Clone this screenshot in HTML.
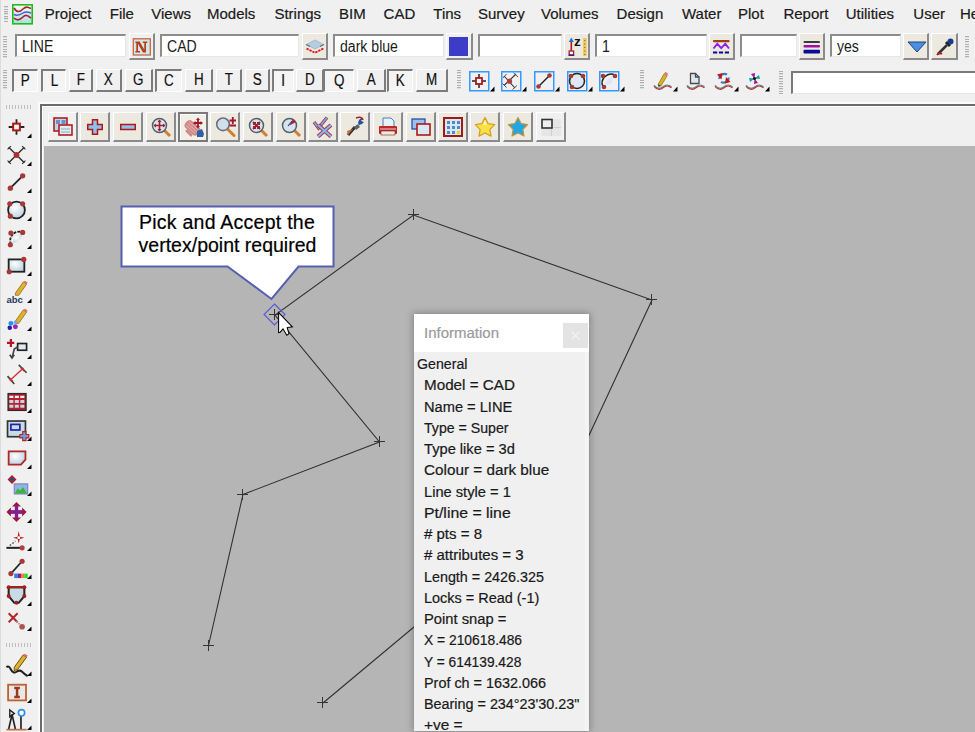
<!DOCTYPE html><html><head><meta charset="utf-8"><style>
html,body{margin:0;padding:0;}
body{width:975px;height:732px;overflow:hidden;position:relative;background:#f0f0f0;font-family:"Liberation Sans",sans-serif;}
.t{position:absolute;white-space:pre;line-height:1;-webkit-text-stroke:0.2px currentColor;}
.inp{position:absolute;box-sizing:border-box;background:#fff;border-top:2px solid #8c8c8c;border-left:2px solid #8c8c8c;border-right:1px solid #e6e6e6;border-bottom:1px solid #e6e6e6;}
.inp span{position:absolute;left:5px;top:1px;line-height:19px;white-space:pre;color:#1a1a1a;}
.btn{position:absolute;box-sizing:border-box;border-top:1px solid #fff;border-left:1px solid #fff;border-right:2px solid #8a8a8a;border-bottom:2px solid #8a8a8a;}
.lb{position:absolute;box-sizing:border-box;background:#f0f0f0;border-top:1px solid #fff;border-left:1px solid #fff;border-right:2px solid #7c7c7c;border-bottom:2px solid #7c7c7c;text-align:center;font-size:16px;line-height:20px;color:#111;-webkit-text-stroke:0.2px currentColor;}
.lb.dn{border-top:2px solid #7c7c7c;border-left:2px solid #7c7c7c;border-right:1px solid #fff;border-bottom:1px solid #fff;background:#f4f4f4;}
svg{position:absolute;overflow:visible;}
</style></head><body>
<div style="position:absolute;left:0px;top:0px;width:1px;height:732px;background:#dcdcdc"></div>
<div style="position:absolute;left:4px;top:6px;width:4px;height:16px;background:repeating-linear-gradient(to bottom,#b0b0b0 0 1px,#dedede 1px 1.5px,transparent 1.5px 2.5px)"></div>
<svg style="left:12px;top:4px" width="21" height="21" viewBox="0 0 21 21">
<defs><linearGradient id="ag" x1="0" y1="0" x2="0" y2="1"><stop offset="0" stop-color="#fbfbfb"/><stop offset="0.5" stop-color="#d8e8f4"/><stop offset="1" stop-color="#a8dce0"/></linearGradient></defs>
<rect x="0.8" y="0.8" width="19.4" height="19" fill="url(#ag)" stroke="#18c018" stroke-width="1.6"/>
<path d="M2 4 C5 9 8 8 11 5 S16 3 19 4.5" stroke="#a82828" stroke-width="1.7" fill="none"/>
<path d="M2 10.5 C5 12 8 11 11 9 S16 8 19 9" stroke="#4060c8" stroke-width="1.5" fill="none"/>
<path d="M2 14 C5 17 8 16 11 13 S16 12 19 14" stroke="#a82828" stroke-width="1.7" fill="none"/>
</svg>
<div class="t" style="left:44.8px;top:6px;font-size:15px;color:#1a1a1a;">Project</div>
<div class="t" style="left:109.8px;top:6px;font-size:15px;color:#1a1a1a;">File</div>
<div class="t" style="left:151.3px;top:6px;font-size:15px;color:#1a1a1a;">Views</div>
<div class="t" style="left:207px;top:6px;font-size:15px;color:#1a1a1a;">Models</div>
<div class="t" style="left:274.4px;top:6px;font-size:15px;color:#1a1a1a;">Strings</div>
<div class="t" style="left:339px;top:6px;font-size:15px;color:#1a1a1a;">BIM</div>
<div class="t" style="left:383.6px;top:6px;font-size:15px;color:#1a1a1a;">CAD</div>
<div class="t" style="left:433.3px;top:6px;font-size:15px;color:#1a1a1a;">Tins</div>
<div class="t" style="left:478px;top:6px;font-size:15px;color:#1a1a1a;">Survey</div>
<div class="t" style="left:541px;top:6px;font-size:15px;color:#1a1a1a;">Volumes</div>
<div class="t" style="left:616.6px;top:6px;font-size:15px;color:#1a1a1a;">Design</div>
<div class="t" style="left:682px;top:6px;font-size:15px;color:#1a1a1a;">Water</div>
<div class="t" style="left:738px;top:6px;font-size:15px;color:#1a1a1a;">Plot</div>
<div class="t" style="left:783.4px;top:6px;font-size:15px;color:#1a1a1a;">Report</div>
<div class="t" style="left:845.7px;top:6px;font-size:15px;color:#1a1a1a;">Utilities</div>
<div class="t" style="left:913.3px;top:6px;font-size:15px;color:#1a1a1a;">User</div>
<div class="t" style="left:960px;top:6px;font-size:15px;color:#1a1a1a;">Help</div>
<div style="position:absolute;left:3px;top:36px;width:4px;height:22px;background:repeating-linear-gradient(to bottom,#b0b0b0 0 1px,#dedede 1px 1.5px,transparent 1.5px 2.5px)"></div>
<div class="inp" style="left:15px;top:34px;width:111px;height:23px"><span style="font-size:16px;transform:scaleX(0.88);transform-origin:0 0">LINE</span></div>
<div class="btn" style="left:129px;top:33px;width:26px;height:27px;background:#f0f0f0"><svg style="left:2px;top:4px" width="19" height="18" viewBox="0 0 19 18"><rect x="1.3" y="0.8" width="17" height="16.2" fill="#d4e4ec" stroke="#c8683c" stroke-width="1.3"/><path d="M3.4 3.4 H8 V5 H3.4Z M4.3 3.4 H6 V14.4 H4.3Z M3.4 13 H8 V14.6 H3.4Z M4.6 3.4 H7.6 L14 14.6 H11Z M12.3 3.4 H14 V14.6 H12.3Z M10.8 3.4 H15.3 V5 H10.8Z" fill="#b4401a"/></svg></div>
<div class="inp" style="left:160px;top:34px;width:139px;height:23px"><span style="font-size:16px;transform:scaleX(0.88);transform-origin:0 0">CAD</span></div>
<div class="btn" style="left:302px;top:33px;width:26px;height:27px;background:#ece9e0"><svg style="left:1px;top:3px" width="22" height="20" viewBox="0 0 22 20"><path d="M2.5 7.5 L11 3 L19.5 7.5 L11 12Z" fill="#b4cce4" stroke="#98b0c8" stroke-width="0.8"/><path d="M2 7.5 L6 9.5 M20 7.5 L16 9.5" stroke="#607080" stroke-width="1.3"/><path d="M2.5 11.5 L11 15.8 L19.5 11.5" stroke="#e01818" stroke-width="1.8" fill="none" stroke-dasharray="2.4 0.9"/></svg></div>
<div class="inp" style="left:333px;top:34px;width:111px;height:23px"><span style="font-size:16px;transform:scaleX(0.88);transform-origin:0 0">dark blue</span></div>
<div class="btn" style="left:446px;top:33px;width:27px;height:27px;background:#f0f0f0"><div style="position:absolute;left:2px;top:3px;width:19px;height:19px;background:#3c3cc8"></div></div>
<div class="inp" style="left:478px;top:34px;width:84px;height:23px"><span style="font-size:16px;transform:scaleX(0.88);transform-origin:0 0"></span></div>
<div class="btn" style="left:564px;top:33px;width:26px;height:27px;background:#ece9e0"><svg style="left:2px;top:2px" width="22" height="22" viewBox="0 0 22 22"><path d="M4.3 5 V15" stroke="#b01828" stroke-width="1.6"/><path d="M1.8 6 L4.3 1.5 L6.8 6Z" fill="#2a6ad8"/><rect x="2.2" y="15" width="4.4" height="4" fill="#fff" stroke="#b01828" stroke-width="1.3"/><path d="M1.6 19.2 H7.2" stroke="#1a1aa0" stroke-width="1.3"/><text x="7" y="10" font-family="Liberation Sans" font-weight="bold" font-size="13.5" fill="#111">z</text><rect x="16" y="2" width="3.6" height="18" fill="#f2c858"/><path d="M17.8 4 V19" stroke="#5a4a20" stroke-width="1" stroke-dasharray="0.9 2.6"/></svg></div>
<div class="inp" style="left:595px;top:34px;width:112px;height:23px"><span style="font-size:16px;transform:scaleX(0.88);transform-origin:0 0">1</span></div>
<div class="btn" style="left:709px;top:33px;width:26px;height:27px;background:#ece9e0"><svg style="left:2px;top:5px" width="20" height="18" viewBox="0 0 20 18"><rect x="1" y="1" width="16.5" height="2.2" rx="0.8" fill="#984010"/><path d="M1.5 9.5 L5.3 4.8 L9.2 9.2 L13.3 4.8 L17 9.5" stroke="#9020e8" stroke-width="1.9" fill="none"/><path d="M1 13.5 H17.5" stroke="#0a0a90" stroke-width="2.2" stroke-dasharray="4.2 1.7"/></svg></div>
<div class="inp" style="left:740px;top:34px;width:57px;height:23px"><span style="font-size:16px;transform:scaleX(0.88);transform-origin:0 0"></span></div>
<div class="btn" style="left:799px;top:33px;width:26px;height:27px;background:#ece9e0"><svg style="left:3px;top:7px" width="18" height="14" viewBox="0 0 18 14"><rect x="0.5" y="0" width="16.5" height="2" rx="1" fill="#3a3a3a"/><rect x="0.5" y="4" width="16.5" height="2.6" rx="1" fill="#a010a0"/><rect x="0.5" y="8.8" width="16.5" height="3.6" rx="1" fill="#0a0a9a"/></svg></div>
<div class="inp" style="left:830px;top:34px;width:71px;height:23px"><span style="font-size:16px;transform:scaleX(0.88);transform-origin:0 0">yes</span></div>
<div class="btn" style="left:903px;top:33px;width:26px;height:27px;background:#ece9e0"><svg style="left:3px;top:7px" width="20" height="12" viewBox="0 0 20 12"><path d="M1 1 H19 L10 11Z" fill="#4a90e0" stroke="#204080" stroke-width="1"/></svg></div>
<div class="btn" style="left:931px;top:33px;width:27px;height:27px;background:#ece9e0"><svg style="left:3px;top:3px" width="20" height="20" viewBox="0 0 20 20"><path d="M3 17 L12 8" stroke="#333" stroke-width="2.5"/><path d="M11 5 L15 9" stroke="#222" stroke-width="3"/><circle cx="15.5" cy="4.5" r="3" fill="#1a3a8a"/><path d="M2 18 Q4 15 7 17" stroke="#b02020" stroke-width="2" fill="none"/></svg></div>
<div style="position:absolute;left:965px;top:36px;width:4px;height:22px;background:repeating-linear-gradient(to bottom,#b0b0b0 0 1px,#dedede 1px 1.5px,transparent 1.5px 2.5px)"></div>
<div style="position:absolute;left:3px;top:70px;width:4px;height:20px;background:repeating-linear-gradient(to bottom,#b0b0b0 0 1px,#dedede 1px 1.5px,transparent 1.5px 2.5px)"></div>
<div class="lb dn" style="left:12px;top:69px;width:26px;height:23px"><span style="display:inline-block;transform:scaleX(0.84)">P</span></div>
<div class="lb dn" style="left:41px;top:69px;width:25px;height:23px"><span style="display:inline-block;transform:scaleX(0.84)">L</span></div>
<div class="lb" style="left:69px;top:69px;width:24px;height:23px"><span style="display:inline-block;transform:scaleX(0.84)">F</span></div>
<div class="lb" style="left:96px;top:69px;width:26px;height:23px"><span style="display:inline-block;transform:scaleX(0.84)">X</span></div>
<div class="lb" style="left:125px;top:69px;width:28px;height:23px"><span style="display:inline-block;transform:scaleX(0.84)">G</span></div>
<div class="lb dn" style="left:155px;top:69px;width:27px;height:23px"><span style="display:inline-block;transform:scaleX(0.84)">C</span></div>
<div class="lb" style="left:185px;top:69px;width:28px;height:23px"><span style="display:inline-block;transform:scaleX(0.84)">H</span></div>
<div class="lb" style="left:216px;top:69px;width:26px;height:23px"><span style="display:inline-block;transform:scaleX(0.84)">T</span></div>
<div class="lb" style="left:245px;top:69px;width:25px;height:23px"><span style="display:inline-block;transform:scaleX(0.84)">S</span></div>
<div class="lb dn" style="left:272px;top:69px;width:22px;height:23px"><span style="display:inline-block;transform:scaleX(0.84)">I</span></div>
<div class="lb" style="left:296px;top:69px;width:28px;height:23px"><span style="display:inline-block;transform:scaleX(0.84)">D</span></div>
<div class="lb dn" style="left:323px;top:69px;width:31px;height:23px"><span style="display:inline-block;transform:scaleX(0.84)">Q</span></div>
<div class="lb" style="left:357px;top:69px;width:29px;height:23px"><span style="display:inline-block;transform:scaleX(0.84)">A</span></div>
<div class="lb dn" style="left:387px;top:69px;width:26px;height:23px"><span style="display:inline-block;transform:scaleX(0.84)">K</span></div>
<div class="lb" style="left:416px;top:69px;width:32px;height:23px"><span style="display:inline-block;transform:scaleX(0.84)">M</span></div>
<div style="position:absolute;left:457px;top:70px;width:4px;height:20px;background:repeating-linear-gradient(to bottom,#b0b0b0 0 1px,#dedede 1px 1.5px,transparent 1.5px 2.5px)"></div>
<svg style="left:469px;top:71px" width="26" height="21" viewBox="0 0 26 21"><rect x="0.75" y="0.75" width="19" height="19" fill="none" stroke="#3399ff" stroke-width="1.5"/><path d="M10 3 V17 M3 10 H17" stroke="#222" stroke-width="1.5"/><rect x="7" y="7" width="6" height="6" fill="#fff" stroke="#b01818" stroke-width="1.8"/><path d="M21 20.5 L25.5 20.5 L25.5 15.5Z" fill="#000"/></svg>
<svg style="left:501px;top:71px" width="26" height="21" viewBox="0 0 26 21"><rect x="0.75" y="0.75" width="19" height="19" fill="none" stroke="#3399ff" stroke-width="1.5"/><path d="M3 5 L14 17 M15 3 L3 14.5" stroke="#333" stroke-width="1.1"/><path d="M12.5 1.8 L17 6 M1.5 12.5 L5.5 16.5 M11.5 18.5 L16 14.5 M2 7 L5.5 3" stroke="#444" stroke-width="0.9"/><circle cx="8.5" cy="10.2" r="2.6" fill="#b04040"/><path d="M21 20.5 L25.5 20.5 L25.5 15.5Z" fill="#000"/></svg>
<svg style="left:534px;top:71px" width="26" height="21" viewBox="0 0 26 21"><rect x="0.75" y="0.75" width="19" height="19" fill="none" stroke="#3399ff" stroke-width="1.5"/><path d="M4 16 L16 4" stroke="#222" stroke-width="1.5"/><circle cx="4.5" cy="15.5" r="2.3" fill="#a83838"/><circle cx="15.5" cy="4.5" r="2.3" fill="#a83838"/><path d="M21 20.5 L25.5 20.5 L25.5 15.5Z" fill="#000"/></svg>
<svg style="left:567px;top:71px" width="26" height="21" viewBox="0 0 26 21"><rect x="0.75" y="0.75" width="19" height="19" fill="none" stroke="#3399ff" stroke-width="1.5"/><circle cx="10" cy="10" r="7.5" fill="#dfe8f2" stroke="#222" stroke-width="1.5"/><circle cx="4" cy="5" r="2.3" fill="#a83838"/><circle cx="16" cy="5" r="2.3" fill="#a83838"/><circle cx="5" cy="16" r="2.3" fill="#a83838"/><path d="M21 20.5 L25.5 20.5 L25.5 15.5Z" fill="#000"/></svg>
<svg style="left:599px;top:71px" width="26" height="21" viewBox="0 0 26 21"><rect x="0.75" y="0.75" width="19" height="19" fill="none" stroke="#3399ff" stroke-width="1.5"/><path d="M4 16 A9 9 0 0 1 16 4" fill="none" stroke="#222" stroke-width="1.5"/><path d="M6 14 Q8 6 15 6 L12 13Z" fill="#dfe8f2"/><circle cx="4" cy="5" r="2.3" fill="#a83838"/><circle cx="16" cy="5" r="2.3" fill="#a83838"/><circle cx="5" cy="16" r="2.3" fill="#a83838"/><path d="M21 20.5 L25.5 20.5 L25.5 15.5Z" fill="#000"/></svg>
<div style="position:absolute;left:640px;top:70px;width:4px;height:20px;background:repeating-linear-gradient(to bottom,#b0b0b0 0 1px,#dedede 1px 1.5px,transparent 1.5px 2.5px)"></div>
<svg style="left:653px;top:71px" width="25" height="21" viewBox="0 0 25 21"><path d="M5 13.5 L11 3 L14.2 4.6 L8 15Z" fill="#e0b020" stroke="#8a6a10" stroke-width="0.7"/><path d="M11 3 L14.2 4.6 L15.2 2.4 L12.2 0.8Z" fill="#e07888"/><path d="M5 13.5 L8 15 L5.5 15.8Z" fill="#222"/><path d="M1 15.3 C4 18.8 7 19.3 10 16.8 S15 14.3 18.5 16.8" stroke="#c03030" stroke-width="1.3" fill="none"/><path d="M1 14.3 C4 17.8 7 18.3 10 15.8 S15 13.3 18.5 15.8" stroke="#707878" stroke-width="1.3" fill="none"/><path d="M20 20.5 L24.5 20.5 L24.5 15.5Z" fill="#000"/></svg>
<svg style="left:686px;top:71px" width="25" height="21" viewBox="0 0 25 21"><path d="M4.5 2.5 H9.5 V6 H13 V12.5 H4.5Z" fill="#dce8f0" stroke="#4a4a4a" stroke-width="1.3"/><path d="M9.5 2.5 L13 6" stroke="#4a4a4a" stroke-width="1.1"/><path d="M1 15.3 C4 18.8 7 19.3 10 16.8 S15 14.3 18.5 16.8" stroke="#c03030" stroke-width="1.3" fill="none"/><path d="M1 14.3 C4 17.8 7 18.3 10 15.8 S15 13.3 18.5 15.8" stroke="#707878" stroke-width="1.3" fill="none"/></svg>
<svg style="left:714px;top:71px" width="25" height="21" viewBox="0 0 25 21"><path d="M5.5 8 A5 4.5 0 0 1 13 3.5" stroke="#3a78c0" stroke-width="2.2" fill="none"/><path d="M14.5 6.5 A5 4.5 0 0 1 7 11" stroke="#3a78c0" stroke-width="2.2" fill="none"/><path d="M3 3.5 L8.5 2 L7.5 8.5Z" fill="#c01818"/><path d="M16.5 11 L11 12.5 L12 6Z" fill="#c01818"/><path d="M1 15.3 C4 18.8 7 19.3 10 16.8 S15 14.3 18.5 16.8" stroke="#c03030" stroke-width="1.3" fill="none"/><path d="M1 14.3 C4 17.8 7 18.3 10 15.8 S15 13.3 18.5 15.8" stroke="#707878" stroke-width="1.3" fill="none"/><path d="M20 20.5 L24.5 20.5 L24.5 15.5Z" fill="#000"/></svg>
<svg style="left:745px;top:71px" width="25" height="21" viewBox="0 0 25 21"><path d="M9.5 7.5 L6 3 L10 2Z" fill="#a018a0"/><path d="M9.5 7.5 L14 4 L15 8Z" fill="#18a0a0"/><path d="M9.5 7.5 L13 12 L9 13Z" fill="#a018a0"/><path d="M9.5 7.5 L5 11 L4 7Z" fill="#18a0a0"/><circle cx="9.5" cy="7.5" r="1.6" fill="#111"/><path d="M1 15.3 C4 18.8 7 19.3 10 16.8 S15 14.3 18.5 16.8" stroke="#c03030" stroke-width="1.3" fill="none"/><path d="M1 14.3 C4 17.8 7 18.3 10 15.8 S15 13.3 18.5 15.8" stroke="#707878" stroke-width="1.3" fill="none"/><path d="M20 20.5 L24.5 20.5 L24.5 15.5Z" fill="#000"/></svg>
<div style="position:absolute;left:779px;top:71px;width:4px;height:23px;background:repeating-linear-gradient(to bottom,#b0b0b0 0 1px,#dedede 1px 1.5px,transparent 1.5px 2.5px)"></div>
<div class="inp" style="left:791px;top:71px;width:200px;height:23px;border-top:2px solid #7a7a7a;border-left:2px solid #7a7a7a"></div>
<div style="position:absolute;left:6px;top:105px;width:25px;height:4px;background:repeating-linear-gradient(to right,#c0c0c0 0 1px,transparent 1px 3px)"></div>
<div style="position:absolute;left:6px;top:643px;width:25px;height:4px;background:repeating-linear-gradient(to right,#c0c0c0 0 1px,transparent 1px 3px)"></div>
<div style="position:absolute;left:38px;top:102px;width:940px;height:640px;background:#fbfbfb"></div>
<div style="position:absolute;left:40px;top:104px;width:940px;height:640px;box-sizing:border-box;border-left:2px solid #6b6b6b;border-top:2px solid #6b6b6b;background:#f0f0f0"></div>
<div style="position:absolute;left:42px;top:106px;width:940px;height:1px;background:#fff"></div>
<div style="position:absolute;left:42px;top:106px;width:1px;height:640px;background:#fff"></div>
<div style="position:absolute;left:44px;top:146px;width:931px;height:586px;background:#b5b5b5"></div>
<svg style="left:0;top:0" width="0" height="0"><defs><radialGradient id="cg" cx="0.4" cy="0.35" r="0.7"><stop offset="0" stop-color="#ffffff"/><stop offset="1" stop-color="#b8d0e0"/></radialGradient></defs></svg>
<svg style="left:6px;top:117px" width="28" height="22" viewBox="0 0 28 22"><g transform="translate(10.5 10) scale(1.12) translate(-10 -10)"><path d="M10 3 V17 M3 10 H17" stroke="#222" stroke-width="1.6"/><rect x="7" y="7" width="6" height="6" fill="#fff" stroke="#b01818" stroke-width="1.8"/></g><path d="M21 21 L25.5 21 L25.5 16.5Z" fill="#000"/></svg>
<svg style="left:6px;top:145px" width="28" height="22" viewBox="0 0 28 22"><g transform="translate(10.5 10) scale(1.12) translate(-10 -10)"><path d="M3 3 L17 17 M17 3 L3 17" stroke="#333" stroke-width="1.3"/><path d="M2 5 L5 2 M15 18 L18 15 M15 2 L18 5 M2 15 L5 18" stroke="#333" stroke-width="1"/><circle cx="10" cy="10" r="2.6" fill="#b03030"/></g><path d="M21 21 L25.5 21 L25.5 16.5Z" fill="#000"/></svg>
<svg style="left:6px;top:172px" width="28" height="22" viewBox="0 0 28 22"><g transform="translate(10.5 10) scale(1.12) translate(-10 -10)"><path d="M4 16 L16 4" stroke="#222" stroke-width="1.6"/><circle cx="4.5" cy="15.5" r="2.4" fill="#a83838"/><circle cx="15.5" cy="4.5" r="2.4" fill="#a83838"/></g><path d="M21 21 L25.5 21 L25.5 16.5Z" fill="#000"/></svg>
<svg style="left:6px;top:200px" width="28" height="22" viewBox="0 0 28 22"><g transform="translate(10.5 10) scale(1.12) translate(-10 -10)"><circle cx="10" cy="10" r="7.5" fill="url(#cg)" stroke="#222" stroke-width="1.6"/><circle cx="4" cy="4.5" r="2.3" fill="#a83838"/><circle cx="15.5" cy="4.5" r="2.3" fill="#a83838"/><circle cx="4.5" cy="15.5" r="2.3" fill="#a83838"/></g><path d="M21 21 L25.5 21 L25.5 16.5Z" fill="#000"/></svg>
<svg style="left:6px;top:228px" width="28" height="22" viewBox="0 0 28 22"><g transform="translate(10.5 10) scale(1.12) translate(-10 -10)"><path d="M5 15.5 A8 8 0 0 1 15.5 5" fill="none" stroke="#222" stroke-width="1.6" stroke-dasharray="2.5 1"/><path d="M6.5 15 Q7 7.5 15 6.5 Q15 12 6.5 15Z" fill="url(#cg)"/><circle cx="5" cy="5.5" r="2.3" fill="#a83838"/><circle cx="15.5" cy="5" r="2.3" fill="#a83838"/><circle cx="4.5" cy="16" r="2.3" fill="#a83838"/></g><path d="M21 21 L25.5 21 L25.5 16.5Z" fill="#000"/></svg>
<svg style="left:6px;top:255px" width="28" height="22" viewBox="0 0 28 22"><g transform="translate(10.5 10) scale(1.12) translate(-10 -10)"><rect x="3" y="5" width="14" height="11" fill="url(#cg)" stroke="#222" stroke-width="1.6"/><circle cx="16.5" cy="5" r="2.3" fill="#a83838"/><circle cx="3.5" cy="16" r="2.3" fill="#a83838"/></g><path d="M21 21 L25.5 21 L25.5 16.5Z" fill="#000"/></svg>
<svg style="left:6px;top:282px" width="28" height="22" viewBox="0 0 28 22"><g transform="translate(10.5 10) scale(1.12) translate(-10 -10)"><path d="M9 11 L16 1 L19 3 L12 13 L9 13Z" fill="#e0b030" stroke="#806000" stroke-width="0.6"/><path d="M16 1 L19 3 L20 1.5 L17.5 0Z" fill="#e07070"/><text x="1" y="20" font-family="Liberation Sans" font-weight="bold" font-size="8.5" fill="#2a3a5a">abc</text></g><path d="M21 21 L25.5 21 L25.5 16.5Z" fill="#000"/></svg>
<svg style="left:6px;top:310px" width="28" height="22" viewBox="0 0 28 22"><g transform="translate(10.5 10) scale(1.12) translate(-10 -10)"><path d="M9 11 L16 1 L19 3 L12 13 L9 13Z" fill="#e0b030" stroke="#806000" stroke-width="0.6"/><path d="M16 1 L19 3 L20 1.5 L17.5 0Z" fill="#e07070"/><circle cx="5" cy="13" r="2.2" fill="#3090e0"/><circle cx="9" cy="16" r="2.2" fill="#a020c0"/><circle cx="4" cy="17" r="2" fill="#2020a0"/><circle cx="9" cy="12" r="1.5" fill="#60b0f0"/></g><path d="M21 21 L25.5 21 L25.5 16.5Z" fill="#000"/></svg>
<svg style="left:6px;top:338px" width="28" height="22" viewBox="0 0 28 22"><g transform="translate(10.5 10) scale(1.12) translate(-10 -10)"><path d="M1.5 5.5 H8 M5 2 V9" stroke="#b01828" stroke-width="2"/><rect x="11" y="6" width="8" height="6" fill="#dfe8f0" stroke="#222" stroke-width="1.5"/><path d="M11 9 L8 11 L6 19 M4 16 L6 19 L8 16" stroke="#444" stroke-width="1.5" fill="none"/></g><path d="M21 21 L25.5 21 L25.5 16.5Z" fill="#000"/></svg>
<svg style="left:6px;top:365px" width="28" height="22" viewBox="0 0 28 22"><g transform="translate(10.5 10) scale(1.12) translate(-10 -10)"><path d="M2 11 L8 18 M12 1 L19 8" stroke="#444" stroke-width="1.5"/><path d="M5 14 L15.5 4.5" stroke="#d03030" stroke-width="1.2"/><path d="M4 12 L4 15.5 L7.5 15.5Z M16.5 3.5 L13 3.5 L16.5 7Z" fill="#d03030"/></g><path d="M21 21 L25.5 21 L25.5 16.5Z" fill="#000"/></svg>
<svg style="left:6px;top:392px" width="28" height="22" viewBox="0 0 28 22"><g transform="translate(10.5 10) scale(1.12) translate(-10 -10)"><rect x="2.5" y="2.5" width="16" height="15" fill="#b82030" stroke="#2a2a2a" stroke-width="1.2"/><path d="M3.6 5.5 H17.4" stroke="#f4f4f4" stroke-width="2" stroke-dasharray="3.6 1.3"/><path d="M3.6 9.5 H17.4 M3.6 13.8 H17.4" stroke="#c8d4e0" stroke-width="2.6" stroke-dasharray="3.6 1.3"/></g><path d="M21 21 L25.5 21 L25.5 16.5Z" fill="#000"/></svg>
<svg style="left:6px;top:420px" width="28" height="22" viewBox="0 0 28 22"><g transform="translate(10.5 10) scale(1.12) translate(-10 -10)"><rect x="2" y="2" width="16" height="14" fill="#c8dce4" stroke="#333" stroke-width="1.5"/><rect x="5" y="5" width="8" height="5" fill="none" stroke="#2020b0" stroke-width="1.5"/><path d="M17 11 V20 M12.5 15.5 H21.5" stroke="#c02020" stroke-width="4"/><path d="M17 12 V19 M13.5 15.5 H20.5" stroke="#60a0e0" stroke-width="2"/></g><path d="M21 21 L25.5 21 L25.5 16.5Z" fill="#000"/></svg>
<svg style="left:6px;top:448px" width="28" height="22" viewBox="0 0 28 22"><g transform="translate(10.5 10) scale(1.12) translate(-10 -10)"><path d="M3 4 H18 V11.5 L14 16 H3Z" fill="url(#cg)" stroke="#b02828" stroke-width="1.6"/></g><path d="M21 21 L25.5 21 L25.5 16.5Z" fill="#000"/></svg>
<svg style="left:6px;top:475px" width="28" height="22" viewBox="0 0 28 22"><g transform="translate(10.5 10) scale(1.12) translate(-10 -10)"><path d="M6 1 L10 5 L6 9 L2 5Z" fill="#b02020"/><rect x="4.5" y="3.5" width="3" height="3" fill="#2050a0"/><rect x="8" y="9" width="12" height="9" fill="#8ab8e0" stroke="#8080c0" stroke-width="1"/><path d="M8.5 17.5 L11 13 L13 15 L16 12 L19.5 17.5Z" fill="#40b040"/></g><path d="M21 21 L25.5 21 L25.5 16.5Z" fill="#000"/></svg>
<svg style="left:6px;top:502px" width="28" height="22" viewBox="0 0 28 22"><g transform="translate(10.5 10) scale(1.12) translate(-10 -10)"><path d="M10 1 L14 5 H11.5 V8.5 H15 V6 L19 10 L15 14 V11.5 H11.5 V15 H14 L10 19 L6 15 H8.5 V11.5 H5 V14 L1 10 L5 6 V8.5 H8.5 V5 H6Z" fill="#a01830"/><path d="M10 4 V16 M4 10 H16" stroke="#8020a0" stroke-width="2.5"/></g><path d="M21 21 L25.5 21 L25.5 16.5Z" fill="#000"/></svg>
<svg style="left:6px;top:530px" width="28" height="22" viewBox="0 0 28 22"><g transform="translate(10.5 10) scale(1.12) translate(-10 -10)"><path d="M12 2 L13 7 L17 8 L13 9 L12 13 L11 9 L7 8 L11 7Z" fill="#b01818"/><circle cx="12" cy="8" r="1.3" fill="#fff"/><path d="M4 15 L9 11" stroke="#444" stroke-width="1.2" stroke-dasharray="1.5 1.5"/><path d="M1 17 H14" stroke="#222" stroke-width="1.8"/><circle cx="15" cy="17" r="2.3" fill="#b04040"/></g><path d="M21 21 L25.5 21 L25.5 16.5Z" fill="#000"/></svg>
<svg style="left:6px;top:558px" width="28" height="22" viewBox="0 0 28 22"><g transform="translate(10.5 10) scale(1.12) translate(-10 -10)"><path d="M5 15 L15 4" stroke="#222" stroke-width="1.5"/><circle cx="15" cy="4" r="2.3" fill="#a83838"/><circle cx="5" cy="15" r="2.3" fill="#a83838"/><rect x="8" y="15" width="3" height="4" fill="#2080f0"/><rect x="11" y="15" width="3" height="4" fill="#8020a0"/><rect x="14" y="15" width="3" height="4" fill="#f08030"/><rect x="17" y="15" width="3" height="4" fill="#20e020"/></g><path d="M21 21 L25.5 21 L25.5 16.5Z" fill="#000"/></svg>
<svg style="left:6px;top:585px" width="28" height="22" viewBox="0 0 28 22"><g transform="translate(10.5 10) scale(1.12) translate(-10 -10)"><path d="M3 3 H17 V11 L12 17 H8 L3 11Z" fill="#c8dae4" stroke="#222" stroke-width="1.8"/><path d="M2 3 H18" stroke="#a02020" stroke-width="2"/><circle cx="3" cy="3" r="1.8" fill="#a02020"/><circle cx="17" cy="3" r="1.8" fill="#a02020"/><circle cx="3" cy="11" r="1.8" fill="#a02020"/><circle cx="17" cy="11" r="1.8" fill="#a02020"/><circle cx="10" cy="17" r="1.8" fill="#a02020"/></g><path d="M21 21 L25.5 21 L25.5 16.5Z" fill="#000"/></svg>
<svg style="left:6px;top:610px" width="28" height="22" viewBox="0 0 28 22"><g transform="translate(10.5 10) scale(1.12) translate(-10 -10)"><path d="M3 4 L11 12 M11 4 L3 12" stroke="#b02828" stroke-width="1.8"/><path d="M10 11 L14 15" stroke="#b09090" stroke-width="1.5" stroke-dasharray="1.5 1"/><circle cx="15" cy="16" r="2.5" fill="#b05050"/></g><path d="M21 21 L25.5 21 L25.5 16.5Z" fill="#000"/></svg>
<svg style="left:6px;top:655px" width="28" height="22" viewBox="0 0 28 22"><g transform="translate(10.5 10) scale(1.12) translate(-10 -10)"><path d="M8 12 L16 1 L19 3 L11 14 L8 15Z" fill="#e0b030" stroke="#604000" stroke-width="0.8"/><path d="M16 1 L19 3 L20 1.5 L17.5 0Z" fill="#e07070"/><path d="M1 12 Q3 10 5 14 T10 16 T15 16 T20 20" stroke="#222" stroke-width="1.8" fill="none"/></g><path d="M21 21 L25.5 21 L25.5 16.5Z" fill="#000"/></svg>
<svg style="left:6px;top:682px" width="28" height="22" viewBox="0 0 28 22"><g transform="translate(10.5 10) scale(1.12) translate(-10 -10)"><rect x="2.5" y="3.5" width="16" height="14" fill="#e8e8e8" stroke="#c06030" stroke-width="1.6"/><path d="M8 6.5 H13 M8 14.5 H13 M10.5 6.5 V14.5" stroke="#a03818" stroke-width="2.2"/></g><path d="M21 21 L25.5 21 L25.5 16.5Z" fill="#000"/></svg>
<svg style="left:6px;top:709px" width="28" height="22" viewBox="0 0 28 22"><g transform="translate(10.5 10) scale(1.12) translate(-10 -10)"><path d="M3 19 L6 6 M9 19 L6 6" stroke="#222" stroke-width="1.5"/><path d="M4 2 V8 L8 5Z" fill="none" stroke="#222" stroke-width="1.3"/><path d="M14 6 V19" stroke="#222" stroke-width="1.5"/><circle cx="14.5" cy="4.5" r="2.8" fill="#fff" stroke="#3090e0" stroke-width="1.5"/><path d="M1 19.5 H19" stroke="#c07040" stroke-width="1.5"/></g><path d="M21 21 L25.5 21 L25.5 16.5Z" fill="#000"/></svg>
<div class="btn" style="left:48px;top:112px;width:30px;height:30px;background:#f0f0f0"><svg style="left:3px;top:3px" width="22" height="22" viewBox="0 0 22 22"><rect x="2" y="2" width="13" height="13" fill="#bcd4ec" stroke="#b02020" stroke-width="1.6"/><rect x="4" y="4" width="4" height="4" fill="#6890c8"/><rect x="9.5" y="4" width="4" height="4" fill="#6890c8"/><rect x="7" y="9" width="13" height="10" fill="#e0ecf4" stroke="#b02020" stroke-width="1.6"/><path d="M9 13 H18 M9 16 H18" stroke="#90a8c0" stroke-width="1"/></svg></div>
<div class="btn" style="left:80px;top:112px;width:30px;height:30px;background:#ece9e0"><svg style="left:3px;top:3px" width="22" height="22" viewBox="0 0 22 22"><path d="M11 3 V19 M3 11 H19" stroke="#b01818" stroke-width="6.5"/><path d="M11 4.5 V17.5 M4.5 11 H17.5" stroke="#8ec2ec" stroke-width="3.5"/></svg></div>
<div class="btn" style="left:113px;top:112px;width:30px;height:30px;background:#ece9e0"><svg style="left:3px;top:3px" width="22" height="22" viewBox="0 0 22 22"><path d="M3 11 H19" stroke="#b01818" stroke-width="6.5"/><path d="M4.5 11 H17.5" stroke="#8ec2ec" stroke-width="3.5"/></svg></div>
<div class="btn" style="left:146px;top:112px;width:30px;height:30px;background:#ece9e0"><svg style="left:3px;top:3px" width="22" height="22" viewBox="0 0 22 22"><path d="M14 14 L20 20" stroke="#d08030" stroke-width="3"/><circle cx="9.5" cy="9.5" r="7" fill="#d8e4ec" stroke="#506070" stroke-width="1.5"/><path d="M9.5 4.5 V14.5 M4.5 9.5 H14.5" stroke="#a02030" stroke-width="1.6"/><path d="M9.5 3.5 L7.5 6 H11.5Z M9.5 15.5 L7.5 13 H11.5Z M3.5 9.5 L6 7.5 V11.5Z M15.5 9.5 L13 7.5 V11.5Z" fill="#a02030"/></svg></div>
<div style="position:absolute;left:178px;top:112px;width:30px;height:30px;box-sizing:border-box;background:#f2efe6;border:2px solid #7a7a7a;box-shadow:inset 1px 1px 0 #fff"><svg style="left:3px;top:3px" width="22" height="22" viewBox="0 0 22 22"><g transform="rotate(42 10 11)"><rect x="1" y="6.5" width="17" height="9.5" rx="4" fill="#d08888"/><path d="M3 8.8 H15 M3 11.2 H16 M3 13.6 H15" stroke="#e8b8b8" stroke-width="0.9"/></g><path d="M4 14 L8 18" stroke="#d08888" stroke-width="3" stroke-linecap="round"/><path d="M14 14 L19 12 L21 17 L20 20 H14Z" fill="#2a60a8"/><path d="M15 2 V10 M11 6 H19" stroke="#a01828" stroke-width="1.8"/><path d="M15 0.5 L13 3 H17Z M15 11.5 L13 9 H17Z M10 6 L12.5 4 V8Z M20 6 L17.5 4 V8Z" fill="#a01828"/></svg></div>
<div class="btn" style="left:210px;top:112px;width:30px;height:30px;background:#ece9e0"><svg style="left:3px;top:3px" width="22" height="22" viewBox="0 0 22 22"><path d="M13.5 13 L20 19.5" stroke="#d08030" stroke-width="3" stroke-linecap="round"/><circle cx="9" cy="8.3" r="6.3" fill="#cfe0ec" stroke="#6a7078" stroke-width="1.6"/><path d="M15.5 4.5 H22 M18.8 1 V8 M15.5 9.5 H22" stroke="#a01828" stroke-width="1.8"/></svg></div>
<div class="btn" style="left:243px;top:112px;width:30px;height:30px;background:#ece9e0"><svg style="left:3px;top:3px" width="22" height="22" viewBox="0 0 22 22"><path d="M14 14 L20 20" stroke="#d08030" stroke-width="3"/><circle cx="9.5" cy="9.5" r="7" fill="#d8e4ec" stroke="#506070" stroke-width="1.5"/><path d="M6 6 L13 13 M13 6 L6 13" stroke="#a02030" stroke-width="1.8"/><path d="M6 6 H9 V9 H6Z M10 10 H13 V13 H10Z M10 6 H13 V9 H10Z M6 10 H9 V13 H6Z" fill="#a02030"/></svg></div>
<div class="btn" style="left:276px;top:112px;width:30px;height:30px;background:#ece9e0"><svg style="left:3px;top:3px" width="22" height="22" viewBox="0 0 22 22"><path d="M14 14 L20 20" stroke="#d08030" stroke-width="3"/><circle cx="9.5" cy="9.5" r="7" fill="#d8e4ec" stroke="#506070" stroke-width="1.5"/><path d="M9.5 9.5 L13 3 L16 6Z" fill="#b02030"/><path d="M8 10 L12 5" stroke="#2040a0" stroke-width="1.2"/></svg></div>
<div class="btn" style="left:308px;top:112px;width:30px;height:30px;background:#ece9e0"><svg style="left:3px;top:3px" width="22" height="22" viewBox="0 0 22 22"><path d="M2 6 L6.5 12 L15 1.5" stroke="#b03040" stroke-width="3.4" fill="none"/><path d="M2 6 L6.5 12 L15 1.5" stroke="#70a8e8" stroke-width="1.8" fill="none"/><path d="M6 9 L19 20.5 M19 9 L6 20.5" stroke="#b03040" stroke-width="4"/><path d="M6 9 L19 20.5 M19 9 L6 20.5" stroke="#80b8f0" stroke-width="2.2"/></svg></div>
<div class="btn" style="left:340px;top:112px;width:30px;height:30px;background:#ece9e0"><svg style="left:3px;top:3px" width="22" height="22" viewBox="0 0 22 22"><path d="M4 19 L11 11" stroke="#333" stroke-width="3"/><path d="M9 13 L4 19 L3 15Z" fill="#c07030"/><path d="M10 11 L14 8 L16 11 L12 14Z" fill="#606060"/><path d="M14 7 Q15 2 19 2 L17 5 L20 6 Q18 9 15 9Z" fill="#2050a0"/><path d="M12 2 Q18 0 19 4" stroke="#b02020" stroke-width="1.5" fill="none"/></svg></div>
<div class="btn" style="left:373px;top:112px;width:30px;height:30px;background:#ece9e0"><svg style="left:3px;top:3px" width="22" height="22" viewBox="0 0 22 22"><path d="M6 2 H14 L17 5 V11 H6Z" fill="#e8f0f8" stroke="#4080c0" stroke-width="1"/><rect x="2" y="10" width="18" height="8" rx="1" fill="#c02828"/><path d="M3 13 H19" stroke="#f0d0d0" stroke-width="1"/><rect x="4" y="15" width="14" height="4" fill="#f0e8e0" stroke="#802020" stroke-width="0.6"/></svg></div>
<div class="btn" style="left:406px;top:112px;width:30px;height:30px;background:#ece9e0"><svg style="left:3px;top:3px" width="22" height="22" viewBox="0 0 22 22"><rect x="2" y="3" width="13" height="10" fill="#9cc0e8" stroke="#2050b0" stroke-width="1.3"/><rect x="7" y="8" width="13" height="11" fill="#d8e8f4" stroke="#b01818" stroke-width="1.6"/></svg></div>
<div class="btn" style="left:438px;top:112px;width:30px;height:30px;background:#ece9e0"><svg style="left:3px;top:3px" width="22" height="22" viewBox="0 0 22 22"><rect x="2" y="2" width="18" height="18" fill="#d8e8f0" stroke="#a01818" stroke-width="2"/><path d="M5 5 H8 V8 H5Z M10 5 H13 V8 H10Z M15 5 H18 V8 H15Z M5 10 H8 V13 H5Z M10 10 H13 V13 H10Z M15 10 H18 V13 H15Z M5 15 H8 V18 H5Z M10 15 H13 V18 H10Z" fill="#5088c8"/><rect x="15" y="15" width="3" height="3" fill="#e8d030"/></svg></div>
<div class="btn" style="left:470px;top:112px;width:30px;height:30px;background:#ece9e0"><svg style="left:3px;top:3px" width="22" height="22" viewBox="0 0 22 22"><path d="M11.0 1.6 L14.1 7.6 L20.7 8.6 L15.9 13.4 L17.0 20.1 L11.0 17.0 L5.0 20.1 L6.1 13.4 L1.3 8.6 L7.9 7.6Z" fill="#f8e048" stroke="#d8a020" stroke-width="1.3" stroke-linejoin="round"/><path d="M11 4 L13 8.5 L9 9Z" fill="#fff8c0"/></svg></div>
<div class="btn" style="left:503px;top:112px;width:30px;height:30px;background:#ece9e0"><svg style="left:3px;top:3px" width="22" height="22" viewBox="0 0 22 22"><path d="M11.0 1.6 L14.1 7.6 L20.7 8.6 L15.9 13.4 L17.0 20.1 L11.0 17.0 L5.0 20.1 L6.1 13.4 L1.3 8.6 L7.9 7.6Z" fill="#1ea8e8" stroke="#d09030" stroke-width="1.1" stroke-linejoin="round"/></svg></div>
<div class="btn" style="left:536px;top:112px;width:30px;height:30px;background:#f0f0f0"><svg style="left:3px;top:3px" width="22" height="22" viewBox="0 0 22 22"><rect x="1.5" y="3" width="19.5" height="17" fill="#e6e6e6"/><path d="M11.5 3 V20 M1.5 11.5 H21" stroke="#d0d0d0" stroke-width="1"/><rect x="2" y="3.5" width="10" height="8.5" fill="#eeeeee" stroke="#333" stroke-width="1.6"/></svg></div>
<svg style="left:0;top:0" width="975" height="732" viewBox="0 0 975 732"><path d="M208.5 645.5 L243.0 494.5 L379.5 442.0 L275.0 315.0 L413.5 215.0 L652.0 300.0 L554.5 509.5 L323.0 703.0" fill="none" stroke="#303030" stroke-width="1.1"/><path d="M203 645.5 H214 M208.5 640 V651 M237 494.5 H248 M242.5 489 V500 M374 441.5 H385 M379.5 436 V447 M269 314.5 H280 M274.5 309 V320 M408 214.5 H419 M413.5 209 V220 M646 299.5 H657 M651.5 294 V305 M317 702.5 H328 M322.5 697 V708 " stroke="#353535" stroke-width="1" shape-rendering="crispEdges"/><path d="M274.5 304 L285 314.5 L274.5 325 L264 314.5Z" fill="none" stroke="#5c5cd0" stroke-width="1.15"/></svg>
<svg style="left:0;top:0" width="975" height="732" viewBox="0 0 975 732"><path d="M121.5 206.5 H333.5 V266.5 H298.5 L271.5 299 L227.5 266.5 H121.5Z" fill="#fff" stroke="#5560b0" stroke-width="2"/></svg>
<div class="t" style="left:121px;top:211px;width:213px;text-align:center;font-size:19.5px;line-height:23px;color:#000"><span style="letter-spacing:0.25px;margin-left:-1px">Pick and Accept the</span><br>vertex/point required</div>
<div style="position:absolute;left:414px;top:314px;width:175px;height:417px;background:#f0f0f0;box-shadow:0 0 7px 1px rgba(0,0,0,0.28)"></div>
<div style="position:absolute;left:414px;top:314px;width:175px;height:38px;background:#fff"></div>
<div style="position:absolute;left:585px;top:352px;width:3px;height:379px;background:#f4f4f4"></div>
<div style="position:absolute;left:563px;top:323px;width:25px;height:25px;background:#e3e3e3"></div>
<svg style="left:570px;top:330px" width="11" height="11" viewBox="0 0 11 11"><path d="M1.5 1.5 L9.5 9.5 M9.5 1.5 L1.5 9.5" stroke="#f2f2f2" stroke-width="1.3"/></svg>
<div class="t" style="left:424px;top:325px;font-size:15px;color:#9a9a9a;">Information</div>
<div class="t" style="left:417px;top:356.5px;font-size:14px;color:#1a1a1a;transform:scaleX(1.012);transform-origin:0 0">General</div>
<div class="t" style="left:424px;top:377.5px;font-size:14px;color:#1a1a1a;transform:scaleX(1.087);transform-origin:0 0">Model = CAD</div>
<div class="t" style="left:424px;top:399.5px;font-size:14px;color:#1a1a1a;transform:scaleX(1.045);transform-origin:0 0">Name = LINE</div>
<div class="t" style="left:424px;top:420.5px;font-size:14px;color:#1a1a1a;transform:scaleX(1.010);transform-origin:0 0">Type = Super</div>
<div class="t" style="left:424px;top:441.5px;font-size:14px;color:#1a1a1a;transform:scaleX(1.047);transform-origin:0 0">Type like = 3d</div>
<div class="t" style="left:424px;top:462.5px;font-size:14px;color:#1a1a1a;transform:scaleX(1.091);transform-origin:0 0">Colour = dark blue</div>
<div class="t" style="left:424px;top:484.5px;font-size:14px;color:#1a1a1a;transform:scaleX(1.047);transform-origin:0 0">Line style = 1</div>
<div class="t" style="left:424px;top:505.5px;font-size:14px;color:#1a1a1a;transform:scaleX(1.131);transform-origin:0 0">Pt/line = line</div>
<div class="t" style="left:424px;top:526.5px;font-size:14px;color:#1a1a1a;transform:scaleX(1.072);transform-origin:0 0"># pts = 8</div>
<div class="t" style="left:424px;top:547.5px;font-size:14px;color:#1a1a1a;transform:scaleX(1.071);transform-origin:0 0"># attributes = 3</div>
<div class="t" style="left:424px;top:569.5px;font-size:14px;color:#1a1a1a;transform:scaleX(1.023);transform-origin:0 0">Length = 2426.325</div>
<div class="t" style="left:424px;top:590.5px;font-size:14px;color:#1a1a1a;transform:scaleX(1.032);transform-origin:0 0">Locks = Read (-1)</div>
<div class="t" style="left:424px;top:611.5px;font-size:14px;color:#1a1a1a;transform:scaleX(1.052);transform-origin:0 0">Point snap =</div>
<div class="t" style="left:424px;top:632.5px;font-size:14px;color:#1a1a1a;transform:scaleX(0.988);transform-origin:0 0">X = 210618.486</div>
<div class="t" style="left:424px;top:654.5px;font-size:14px;color:#1a1a1a;transform:scaleX(0.983);transform-origin:0 0">Y = 614139.428</div>
<div class="t" style="left:424px;top:675.5px;font-size:14px;color:#1a1a1a;transform:scaleX(1.028);transform-origin:0 0">Prof ch = 1632.066</div>
<div class="t" style="left:424px;top:696.5px;font-size:14px;color:#1a1a1a;transform:scaleX(1.026);transform-origin:0 0">Bearing = 234°23'30.23"</div>
<div class="t" style="left:424px;top:717.5px;font-size:14px;color:#1a1a1a;transform:scaleX(1.103);transform-origin:0 0">+ve =</div>
<svg style="left:278px;top:312px" width="17" height="25" viewBox="0 0 17 25"><path d="M0.6 0.6 V20.5 L2.2 20.2 L5 16.8 L8.8 23.2 L11 21.8 L9.2 15.6 L14.4 14.8Z" fill="#fff" stroke="#000" stroke-width="1.05" stroke-linejoin="miter"/></svg>
</body></html>
